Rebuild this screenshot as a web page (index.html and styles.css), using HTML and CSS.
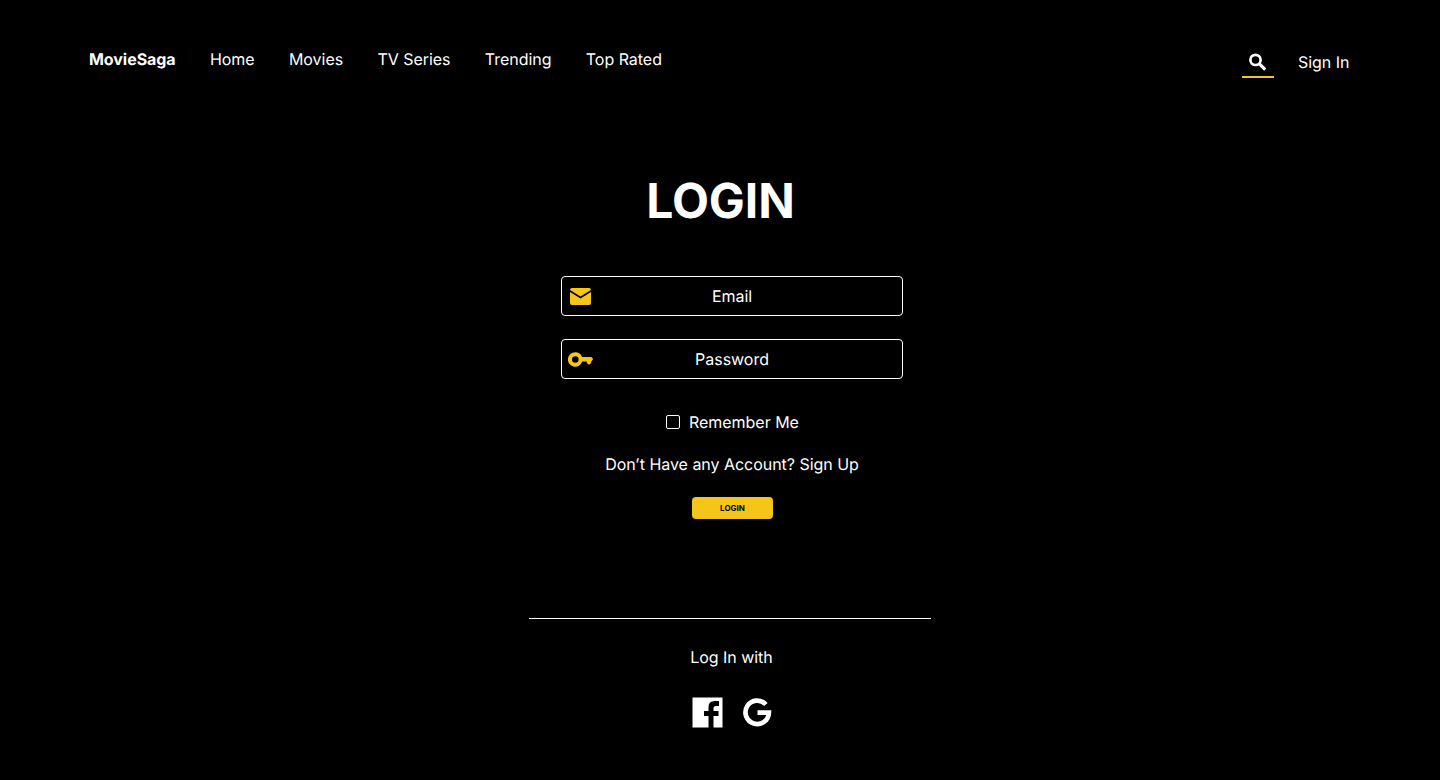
FILE: index.html
```html
<!DOCTYPE html>
<html lang="en">
<head>
<meta charset="utf-8">
<title>MovieSaga</title>
<link rel="stylesheet" href="styles.css">
</head>
<body>
<header class="header">
  <nav class="nav">
    <a class="brand">MovieSaga</a>
    <a>Home</a>
    <a>Movies</a>
    <a>TV Series</a>
    <a>Trending</a>
    <a>Top Rated</a>
  </nav>
  <div class="actions">
    <div class="search">
      <svg width="18" height="18" viewBox="0 0 18 18" fill="none" stroke="#fff"><circle cx="6.500" cy="6.900" r="5.100" stroke-width="2.700"/><path d="M9.900 10.300L16.200 16.600" stroke-width="3.200"/></svg>
    </div>
    <a>Sign In</a>
  </div>
</header>
<main class="main">
  <h1 class="title">LOGIN</h1>
  <form class="form">
    <div class="field">
      <svg class="field-icon" width="26" height="20" viewBox="0 0 26 20" fill="#f5c518"><path d="M4 2H21Q23 2 23 4L12.500 10.500L2 4Q2 2 4 2ZM2 6L12.500 12.600L23 6V17Q23 19 21 19H4Q2 19 2 17Z"/></svg>
      <span>Email</span>
    </div>
    <div class="field">
      <svg class="field-icon" width="26" height="20" viewBox="0 0 26 20" fill="#f5c518"><path fill-rule="evenodd" d="M7.300 3.200A7.300 7.300 0 0 1 14.100 8.100H23.400L25.100 10L23.500 12.600H23.100V14L21 15.700L18.800 14V12.600H14.200A7.300 7.300 0 1 1 7.300 3.200ZM7.300 7.200A3.300 3.300 0 1 0 7.300 13.800A3.300 3.300 0 1 0 7.300 7.200Z"/></svg>
      <span>Password</span>
    </div>
    <label class="remember"><span class="box"></span>Remember Me</label>
    <p class="signup">Don’t Have any Account? Sign Up</p>
    <button class="submit" type="button">LOGIN</button>
  </form>
  <section class="social">
    <p class="social-label">Log In with</p>
    <div class="social-icons">
      <svg width="31" height="31" viewBox="0 0 31 31" fill="#fff"><path d="M.5.500H30.500V30.500H21.500V19H26.500V14H21.500V11.500Q21.500 9 24 9H27V4H22.500Q16.500 4 16.500 10V14H12V19H16.500V30.500H.5Z"/></svg>
      <svg width="29" height="31" viewBox="0 0 29 31" fill="none" stroke="#fff" stroke-width="4.700"><path d="M22.900 7.500A11.700 11.700 0 1 0 25.900 15.600H14.500"/></svg>
    </div>
  </section>
</main>
</body>
</html>
```
FILE: styles.css
```css
body {
  margin: 0;
  height: 780px;
  overflow: hidden;
  background: #000;
  color: #fff;
  font: 400 16px/20px Inter, sans-serif;
  letter-spacing: -0.030px;
  text-rendering: geometricPrecision;
}

p { margin: 0; }

.header {
  display: flex;
  justify-content: space-between;
  height: 30px;
  padding: 49px 91px 0 89px;
}

.nav { display: flex; gap: 34.300px; }
.brand { font-weight: 700; letter-spacing: -0.050px; }

.actions {
  display: flex;
  gap: 24px;
  padding-top: 3px;
}

.actions a { width: 51px; white-space: nowrap; }

.search {
  box-sizing: border-box;
  width: 32px;
  height: 26px;
  padding: 1px 0 0 7px;
  border-bottom: 2px solid #f5c518;
}

.search svg { display: block; }

.main {
  display: flex;
  flex-direction: column;
  align-items: center;
}

.title {
  margin: 92px 0 0 1px;
  font-size: 48px;
  line-height: 60px;
  font-weight: 700;
}

.form {
  display: flex;
  flex-direction: column;
  align-items: center;
  margin: 45px 0 0 24px;
}

.field {
  box-sizing: border-box;
  display: grid;
  grid-template-columns: 26px 1fr 26px;
  align-items: center;
  width: 342px;
  height: 40px;
  margin-bottom: 23px;
  padding: 0 6px;
  border: 1px solid #fff;
  border-radius: 4px;
  text-align: center;
}

.remember {
  display: flex;
  align-items: center;
  gap: 9px;
  width: 132px;
  margin-top: 10px;
  white-space: nowrap;
}

.box {
  box-sizing: border-box;
  flex: none;
  width: 14px;
  height: 14px;
  border: 1px solid #fff;
  border-radius: 2px;
}

.signup { margin-top: 22px; }

.submit {
  width: 81px;
  height: 22px;
  margin-top: 23px;
  padding: 0 0 0 1px;
  border: 0;
  border-radius: 4px;
  background: #f5c518;
  color: #000;
  font: 700 8px/22px Inter, sans-serif;
}

.social {
  display: flex;
  flex-direction: column;
  align-items: center;
  box-sizing: border-box;
  width: 402px;
  margin: 99px 0 0 20px;
  padding: 28px 0 0 3px;
  border-top: 1px solid #fff;
}

.social-icons {
  display: flex;
  gap: 20px;
  margin-top: 30px;
}
```
